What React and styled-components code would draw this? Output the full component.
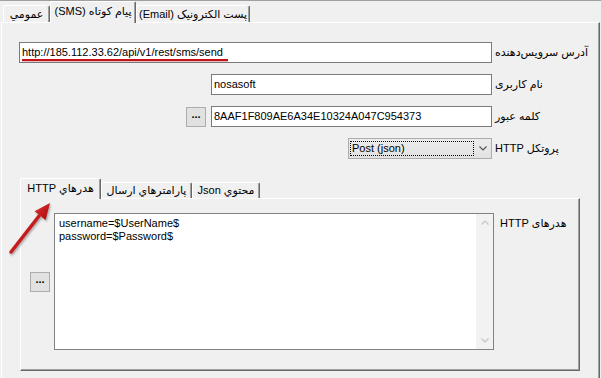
import React from 'react';
import styled, { createGlobalStyle } from 'styled-components';

const GlobalStyle = createGlobalStyle`
  html, body {
    margin: 0;
    padding: 0;
    background: #f0f0f0;
  }
  body {
    font-family: "Liberation Sans", "DejaVu Sans", sans-serif;
    font-size: 11px;
    color: #000;
  }
`;

const Window = styled.div`
  position: relative;
  width: 601px;
  height: 378px;
  overflow: hidden;
  box-sizing: border-box;
  background: #f0f0f0;
  border-top: 1px solid #a0a0a0;
`;

const TabStrip = styled.div`
  position: relative;
  z-index: 1;
  display: flex;
  align-items: flex-end;
  height: ${(p) => p.$h}px;
  padding-left: ${(p) => p.$pl}px;
`;

const Tab = styled.div`
  box-sizing: border-box;
  width: ${(p) => p.$w}px;
  height: ${(p) => (p.$active ? p.$h + 1 : p.$h - 4)}px;
  margin-bottom: ${(p) => (p.$active ? -1 : 0)}px;
  padding-bottom: ${(p) => (p.$active ? 2 : 0)}px;
  display: flex;
  align-items: center;
  justify-content: center;
  direction: rtl;
  white-space: nowrap;
  background: #f0f0f0;
  border-top: 1px solid #fff;
  border-left: 1px solid #fff;
  border-right: 1px solid #696969;
  box-shadow: inset -1px 0 0 #a0a0a0;
  border-radius: 2px 2px 0 0;
`;

const Page = styled.div`
  box-sizing: border-box;
  width: 599px;
  height: 370px;
  margin-left: 1px;
  padding: 19px 0 0 17px;
  border-top: 1px solid #fff;
  border-left: 1px solid #fff;
  border-right: 1px solid #696969;
  box-shadow: inset -1px 0 0 #a0a0a0;
`;

const Form = styled.div`
  display: flex;
  flex-direction: column;
  gap: 11px;
`;

const Row = styled.div`
  display: flex;
  align-items: center;
  gap: 3px;
`;

const Fields = styled.div`
  width: 473px;
  display: flex;
  justify-content: flex-end;
  align-items: center;
  gap: 5px;
`;

const Label = styled.span`
  direction: rtl;
  white-space: nowrap;
`;

const Input = styled.div`
  box-sizing: border-box;
  width: ${(p) => p.$w}px;
  height: 21px;
  padding: 0 2px;
  line-height: 19px;
  background: #fff;
  border: 1px solid #7a7a7a;
  white-space: nowrap;
  overflow: hidden;
`;

const Marked = styled.span`
  position: relative;
  &::after {
    content: '';
    position: absolute;
    left: 0;
    right: -5px;
    bottom: -3px;
    height: 2px;
    background: #c3141c;
    box-shadow: 0 1px 0 rgba(200, 60, 60, 0.35);
  }
`;

const DotsButton = styled.div`
  box-sizing: border-box;
  width: 20px;
  height: 20px;
  display: flex;
  align-items: center;
  justify-content: center;
  padding-bottom: 5px;
  background: #e1e1e1;
  border: 1px solid #adadad;
  font-weight: bold;
  font-size: 11px;
`;

const Select = styled.div`
  box-sizing: border-box;
  width: 144px;
  height: 21px;
  display: flex;
  align-items: center;
  padding: 2px 0 2px 1px;
  background: linear-gradient(#ececec, #e2e2e2);
  border: 1px solid #acacac;
`;

const SelectValue = styled.span`
  box-sizing: border-box;
  width: 124px;
  height: 100%;
  padding-left: 1px;
  line-height: 13px;
  border: 1px dotted #000;
`;

const SelectArrow = styled.span`
  flex: 1;
  display: flex;
  justify-content: center;
  align-items: center;
`;

const InnerTabs = styled.div`
  width: 560px;
  margin: 19px 0 0 1px;
`;

const InnerPanel = styled.div`
  box-sizing: border-box;
  height: 173px;
  display: flex;
  align-items: flex-start;
  gap: 6px;
  padding: 14px 0 0 9px;
  border-top: 1px solid #fff;
  border-left: 1px solid #fff;
  border-right: 1px solid #696969;
  border-bottom: 1px solid #696969;
  box-shadow: inset -1px -1px 0 #a0a0a0;
`;

const EditorGroup = styled.div`
  display: flex;
  align-items: center;
  gap: 4px;
`;

const TextArea = styled.div`
  box-sizing: border-box;
  width: 440px;
  height: 137px;
  display: flex;
  background: #fff;
  border: 1px solid #828282;
`;

const TextLines = styled.div`
  flex: 1;
  padding: 3px 0 0 4px;
  line-height: 13px;
`;

const ScrollBar = styled.div`
  width: 17px;
  display: flex;
  flex-direction: column;
  justify-content: space-between;
  align-items: center;
  padding: 6px 0;
  background: #f2f2f2;
`;

const SideLabel = styled(Label)`
  margin-top: 4px;
`;

const Overlay = styled.svg`
  position: absolute;
  left: 0;
  top: 0;
  pointer-events: none;
`;

const Chevron = ({ up, color }) => (
  <svg width="8" height="5" viewBox="0 0 8 5">
    <path
      d={up ? 'M0.5 4.5 L4 1 L7.5 4.5' : 'M0.5 0.5 L4 4 L7.5 0.5'}
      fill="none"
      stroke={color}
      strokeWidth="1.2"
    />
  </svg>
);

function App() {
  return (
    <Window>
      <GlobalStyle />
      <TabStrip $h={21} $pl={3}>
        <Tab $w={47} $h={21}>عمومي</Tab>
        <Tab $w={86} $h={21} $active>پیام کوتاه (SMS)</Tab>
        <Tab $w={114} $h={21}>پست الکترونیک (Email)</Tab>
      </TabStrip>
      <Page>
        <Form>
          <Row>
            <Fields>
              <Input $w={473}>
                <Marked>http://185.112.33.62/api/v1/rest/sms/send</Marked>
              </Input>
            </Fields>
            <Label>آدرس سرویس‌دهنده</Label>
          </Row>
          <Row>
            <Fields>
              <Input $w={281}>nosasoft</Input>
            </Fields>
            <Label>نام کاربری</Label>
          </Row>
          <Row>
            <Fields>
              <DotsButton>...</DotsButton>
              <Input $w={281}>8AAF1F809AE6A34E10324A047C954373</Input>
            </Fields>
            <Label>کلمه عبور</Label>
          </Row>
          <Row>
            <Fields>
              <Select>
                <SelectValue>Post (json)</SelectValue>
                <SelectArrow>
                  <Chevron color="#555" />
                </SelectArrow>
              </Select>
            </Fields>
            <Label>پروتکل HTTP</Label>
          </Row>
        </Form>
        <InnerTabs>
          <TabStrip $h={20} $pl={0}>
            <Tab $w={81} $h={20} $active>هدرهاي HTTP</Tab>
            <Tab $w={91} $h={20}>پارامترهاي ارسال</Tab>
            <Tab $w={68} $h={20}>محتوي Json</Tab>
          </TabStrip>
          <InnerPanel>
            <EditorGroup>
              <DotsButton>...</DotsButton>
              <TextArea>
                <TextLines>
                  <div>username=$UserName$</div>
                  <div>password=$Password$</div>
                </TextLines>
                <ScrollBar>
                  <Chevron up color="#c4c4c4" />
                  <Chevron color="#c4c4c4" />
                </ScrollBar>
              </TextArea>
            </EditorGroup>
            <SideLabel>هدرهای HTTP</SideLabel>
          </InnerPanel>
        </InnerTabs>
      </Page>
      <Overlay width="601" height="378">
        <defs>
          <linearGradient id="arrowFill" x1="0" y1="0" x2="1" y2="1">
            <stop offset="0" stopColor="#e0332f" />
            <stop offset="1" stopColor="#a8090c" />
          </linearGradient>
          <filter id="arrowShadow" x="-50%" y="-50%" width="200%" height="200%">
            <feDropShadow dx="1" dy="1.5" stdDeviation="1" floodColor="#000" floodOpacity="0.35" />
          </filter>
        </defs>
        <g filter="url(#arrowShadow)">
          <line x1="11" y1="251" x2="39" y2="215" stroke="url(#arrowFill)" strokeWidth="3.5" strokeLinecap="round" />
          <polygon points="50,202 45.6,219 34.6,210.2" fill="url(#arrowFill)" />
        </g>
      </Overlay>
    </Window>
  );
}

export default App;
